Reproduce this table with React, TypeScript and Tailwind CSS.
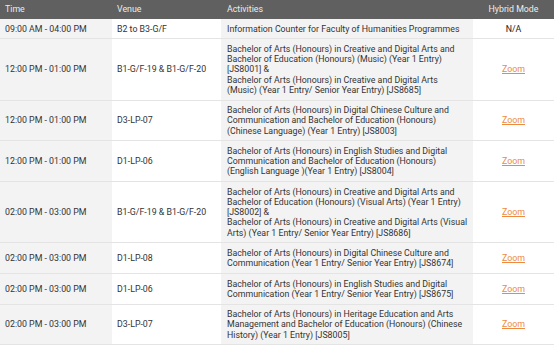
const rows: { time: string; venue: string; activities: string[]; mode: string }[] = [
  {
    time: "09:00 AM - 04:00 PM",
    venue: "B2 to B3-G/F",
    activities: ["Information Counter for Faculty of Humanities Programmes"],
    mode: "N/A",
  },
  {
    time: "12:00 PM - 01:00 PM",
    venue: "B1-G/F-19 & B1-G/F-20",
    activities: [
      "Bachelor of Arts (Honours) in Creative and Digital Arts and Bachelor of Education (Honours) (Music) (Year 1 Entry) [JS8001] &",
      "Bachelor of Arts (Honours) in Creative and Digital Arts (Music) (Year 1 Entry/ Senior Year Entry) [JS8685]",
    ],
    mode: "Zoom",
  },
  {
    time: "12:00 PM - 01:00 PM",
    venue: "D3-LP-07",
    activities: [
      "Bachelor of Arts (Honours) in Digital Chinese Culture and Communication and Bachelor of Education (Honours) (Chinese Language) (Year 1 Entry) [JS8003]",
    ],
    mode: "Zoom",
  },
  {
    time: "12:00 PM - 01:00 PM",
    venue: "D1-LP-06",
    activities: [
      "Bachelor of Arts (Honours) in English Studies and Digital Communication and Bachelor of Education (Honours) (English Language )(Year 1 Entry) [JS8004]",
    ],
    mode: "Zoom",
  },
  {
    time: "02:00 PM - 03:00 PM",
    venue: "B1-G/F-19 & B1-G/F-20",
    activities: [
      "Bachelor of Arts (Honours) in Creative and Digital Arts and Bachelor of Education (Honours) (Visual Arts) (Year 1 Entry) [JS8002] &",
      "Bachelor of Arts (Honours) in Creative and Digital Arts (Visual Arts) (Year 1 Entry/ Senior Year Entry) [JS8686]",
    ],
    mode: "Zoom",
  },
  {
    time: "02:00 PM - 03:00 PM",
    venue: "D1-LP-08",
    activities: [
      "Bachelor of Arts (Honours) in Digital Chinese Culture and Communication (Year 1 Entry/ Senior Year Entry) [JS8674]",
    ],
    mode: "Zoom",
  },
  {
    time: "02:00 PM - 03:00 PM",
    venue: "D1-LP-06",
    activities: [
      "Bachelor of Arts (Honours) in English Studies and Digital Communication (Year 1 Entry/ Senior Year Entry) [JS8675]",
    ],
    mode: "Zoom",
  },
  {
    time: "02:00 PM - 03:00 PM",
    venue: "D3-LP-07",
    activities: [
      "Bachelor of Arts (Honours) in Heritage Education and Arts Management and Bachelor of Education (Honours) (Chinese History) (Year 1 Entry) [JS8005]",
    ],
    mode: "Zoom",
  },
]

export default function App() {
  return (
    <div className="w-[554px] h-[346px] overflow-hidden bg-white font-['Roboto',sans-serif] text-[8.8px] leading-[10.2px] text-[#333]">
      <table className="w-[554px] table-fixed border-collapse">
        <colgroup>
          <col className="w-[112px]" />
          <col className="w-[109px]" />
          <col className="w-[252px]" />
          <col className="w-[81px]" />
        </colgroup>
        <thead>
          <tr className="bg-[#606060] text-[#ececec]">
            <th className="h-[19px] px-[5px] text-left font-normal">Time</th>
            <th className="px-[5px] text-left font-normal">Venue</th>
            <th className="pl-[6px] pr-[4px] text-left font-normal">Activities</th>
            <th className="px-[5px] text-center font-normal">Hybrid Mode</th>
          </tr>
        </thead>
        <tbody>
          {rows.map((r, i) => (
            <tr key={i} className="border-b border-[#e4e4e4] align-middle">
              <td className="bg-[#f3f3f3] px-[5px] py-[4.6px]">{r.time}</td>
              <td className="px-[5px] py-[4.6px]">{r.venue}</td>
              <td className="bg-[#f3f3f3] pl-[6px] pr-[4px] py-[4.6px]">
                {r.activities.map((a, j) => (
                  <div key={j}>{a}</div>
                ))}
              </td>
              <td className="px-[5px] py-[4.6px] text-center">
                {r.mode === "Zoom" ? (
                  <a href="#" className="text-[#ec8a3f] underline">
                    Zoom
                  </a>
                ) : (
                  <span className="text-[#222]">{r.mode}</span>
                )}
              </td>
            </tr>
          ))}
        </tbody>
      </table>
    </div>
  )
}
